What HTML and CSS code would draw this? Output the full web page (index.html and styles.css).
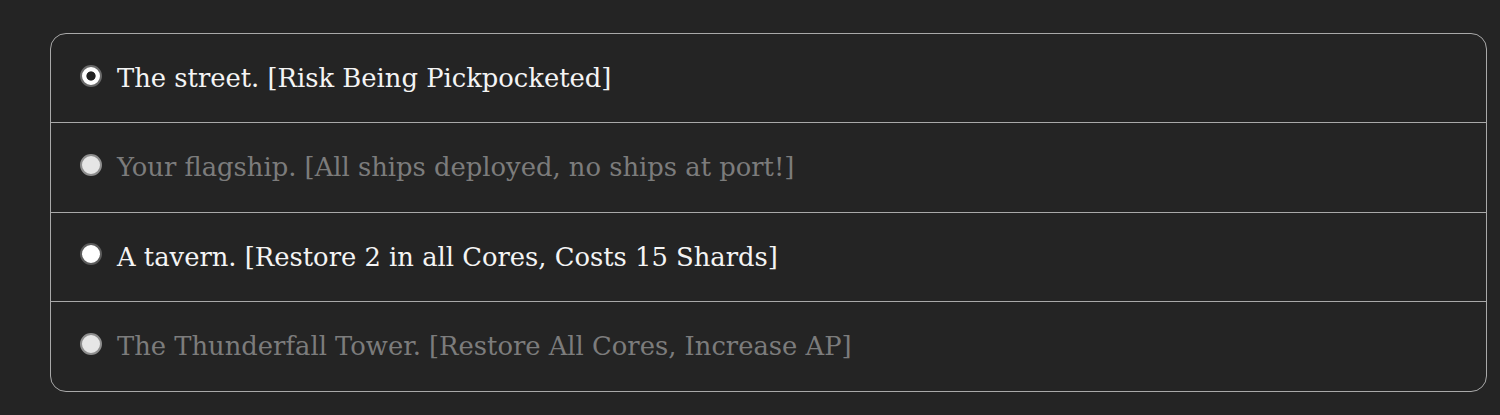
FILE: index.html
```html
<!DOCTYPE html>
<html lang="en">
<head>
<meta charset="utf-8">
<title>Destinations</title>
<link rel="stylesheet" href="styles.css">
</head>
<body>
<form class="choices">
  <label class="choice">
    <input type="radio" name="dest" class="radio" checked>
    <span class="label">The street. [Risk Being Pickpocketed]</span>
  </label>
  <label class="choice is-disabled">
    <input type="radio" name="dest" class="radio" disabled>
    <span class="label">Your flagship. [All ships deployed, no ships at port!]</span>
  </label>
  <label class="choice">
    <input type="radio" name="dest" class="radio">
    <span class="label">A tavern. [Restore 2 in all Cores, Costs 15 Shards]</span>
  </label>
  <label class="choice is-disabled">
    <input type="radio" name="dest" class="radio" disabled>
    <span class="label">The Thunderfall Tower. [Restore All Cores, Increase AP]</span>
  </label>
</form>
</body>
</html>
```

FILE: styles.css
```css
html, body {
  margin: 0;
  padding: 0;
  background: #242424;
}

body {
  padding: 33px 13px 24px 50px;
  font-family: "DejaVu Serif", Georgia, serif;
}

.choices {
  margin: 0;
  border: 1px solid #a9a9a9;
  border-radius: 16px;
  display: flex;
  flex-direction: column;
}

.choice {
  display: flex;
  align-items: center;
  gap: 15px;
  height: 88.5px;
  padding: 0 0 0 29px;
  border-top: 1px solid #a9a9a9;
  cursor: pointer;
}

.choice:first-child {
  border-top: none;
  height: 88px;
}

.radio {
  appearance: none;
  -webkit-appearance: none;
  margin: 0 0 5px 0;
  width: 22px;
  height: 22px;
  flex: none;
  border-radius: 50%;
  border: 2px solid #5c5c5c;
  background: #ffffff;
  box-sizing: border-box;
}

.radio:checked {
  border-color: #6a6a6a;
  background: radial-gradient(circle, #222 0 4.2px, #fff 5px);
}

.radio:disabled {
  border-color: #8e8e8e;
  background: #e6e6e6;
}

.label {
  font-size: 25.8px;
  color: #f4f4f4;
  line-height: 32px;
}

.is-disabled {
  cursor: default;
}

.is-disabled .label {
  color: #7c7c7c;
}
```
